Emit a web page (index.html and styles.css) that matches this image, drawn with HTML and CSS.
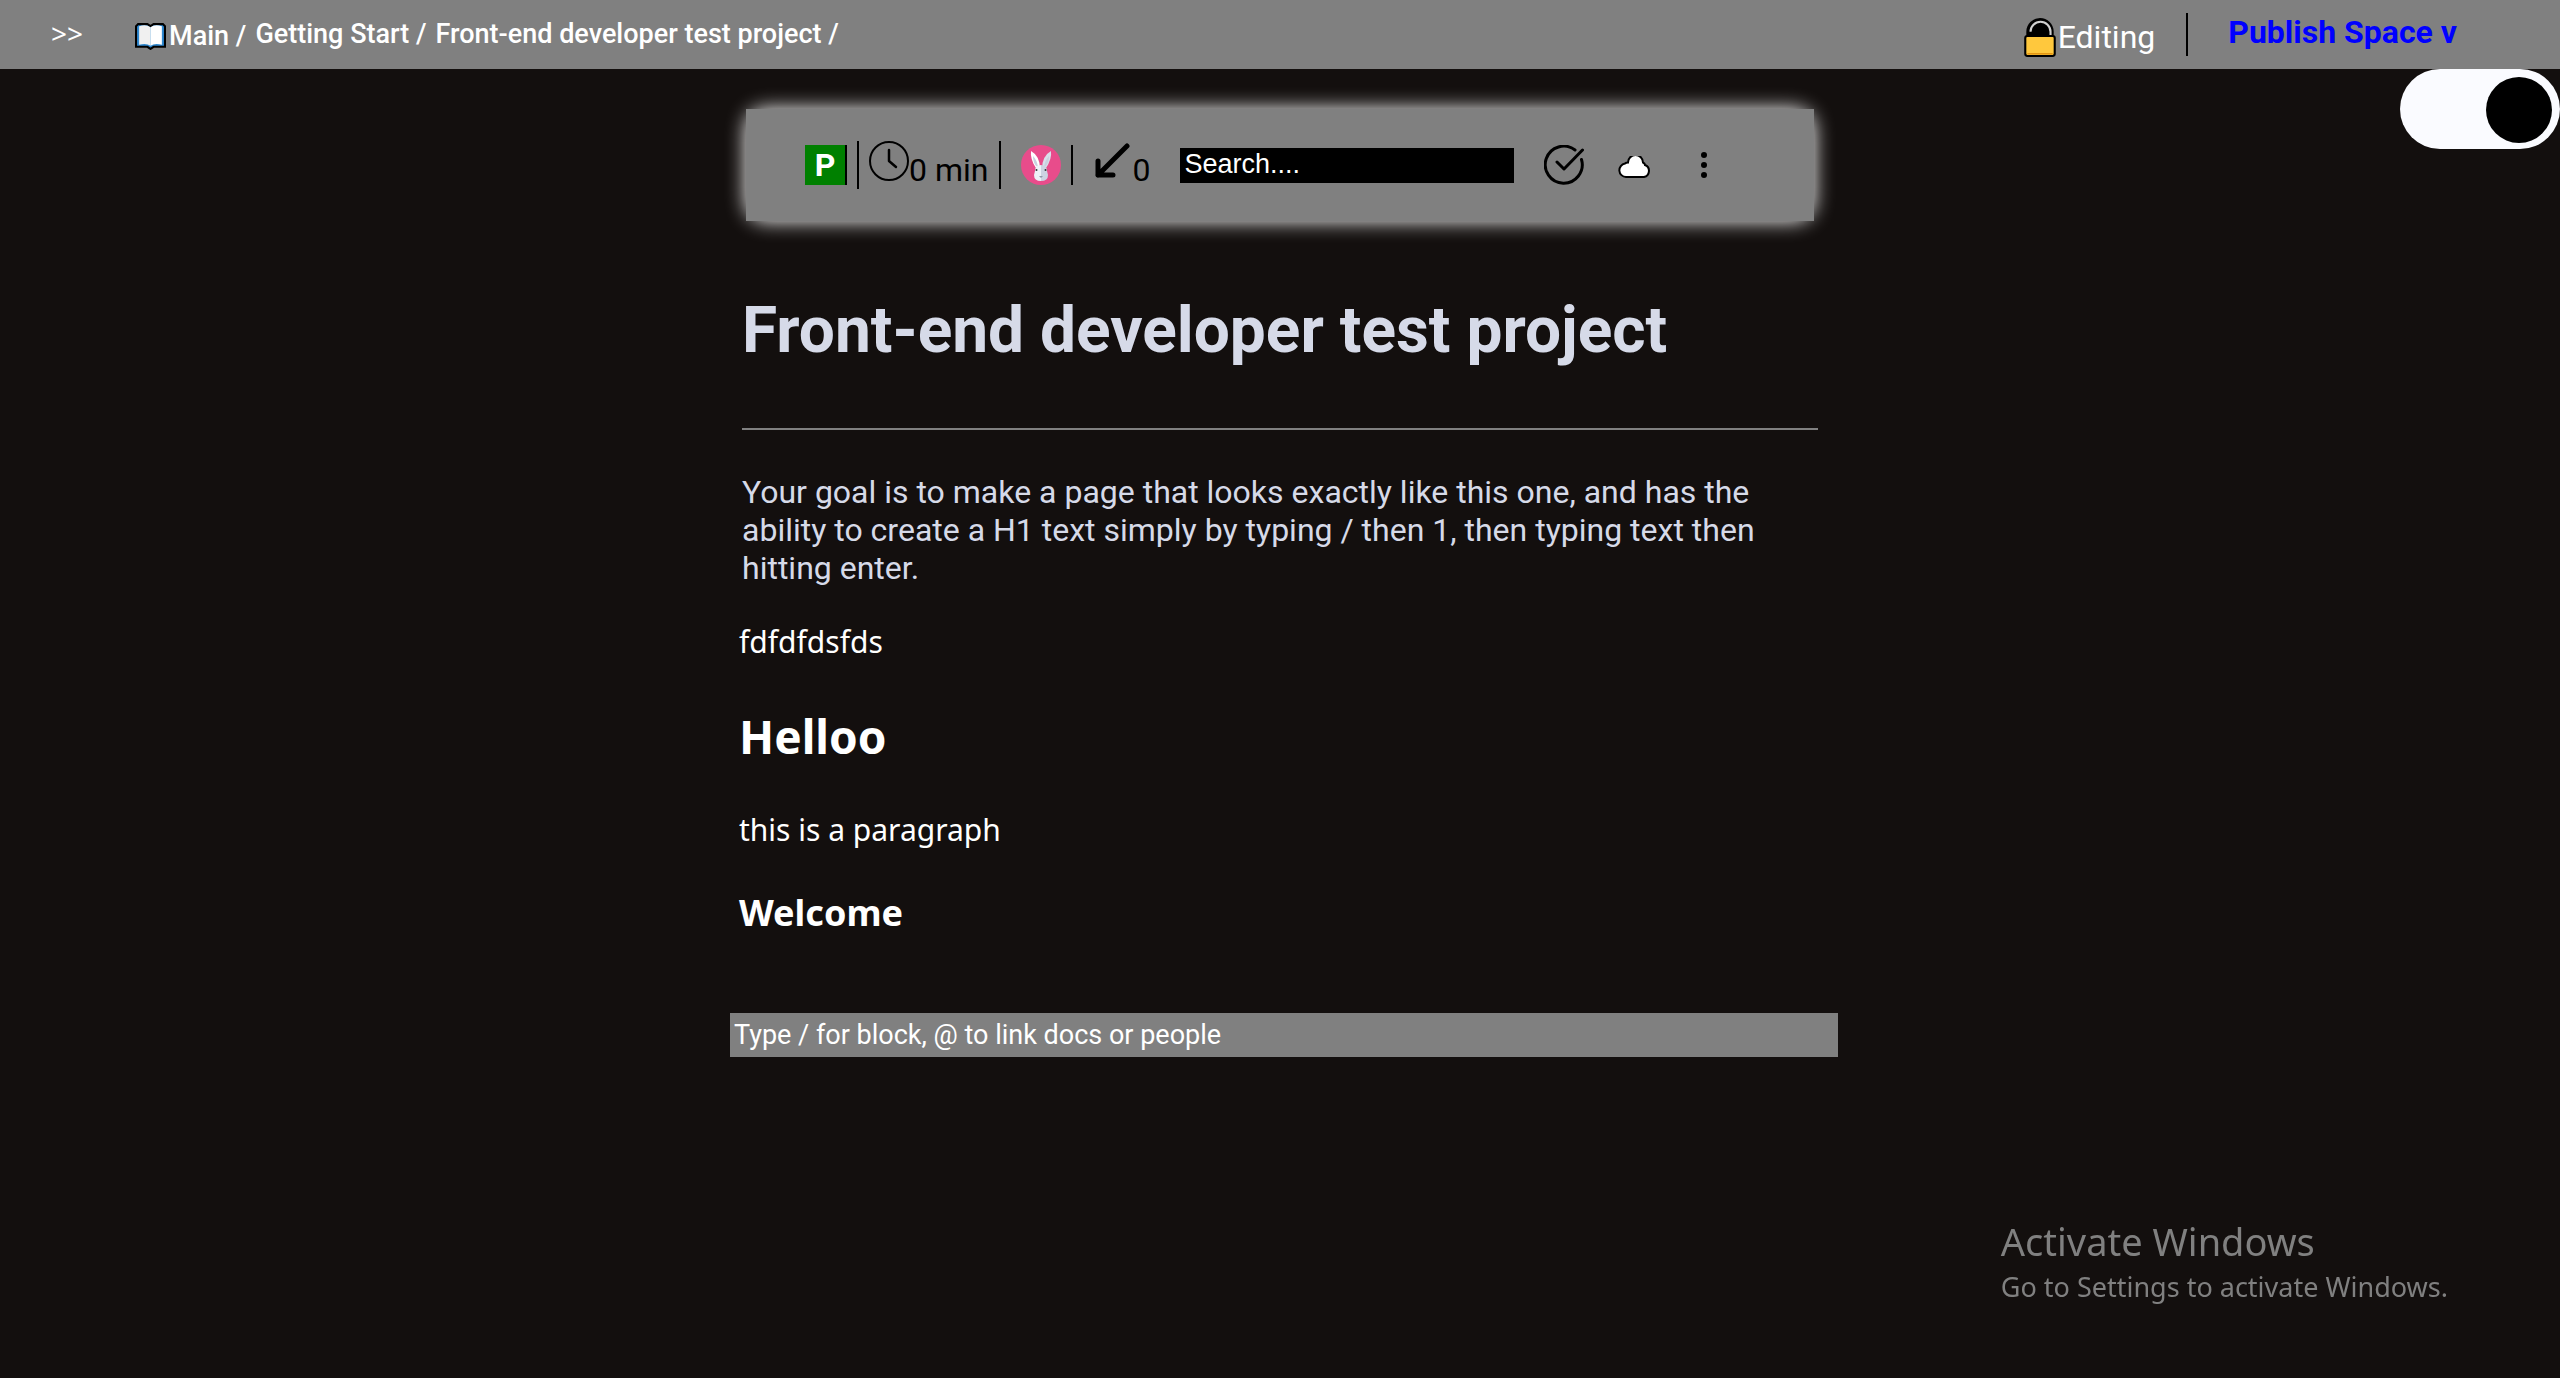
FILE: index.html
```html
<!DOCTYPE html>
<html lang="en">
<head>
<meta charset="utf-8">
<title>Front-end developer test project</title>
<link rel="stylesheet" href="styles.css">
</head>
<body>
<header class="topbar">
  <button class="expand" type="button">&gt;&gt;</button>
  <nav class="crumbs" aria-label="Breadcrumb">
    <a class="crumb crumb-home" href="#main">
      <svg class="book" viewBox="0 0 30 26" aria-hidden="true">
        <path d="M1 3 3 1h9l3 2 3-2h9l2 2v20H18l-3 2-3-2H1z" fill="#2f88cf" stroke="#000" stroke-width="2"/>
        <path d="M4 3q7-2 11 1v18q-4-3-11-1z" fill="#f0f0f0"/>
        <path d="M15 4q4-3 11-1v18q-7-2-11 1z" fill="#fff"/>
      </svg>Main /</a>
    <a class="crumb" href="#start">Getting Start /</a>
    <a class="crumb" href="#project">Front-end developer test project /</a>
  </nav>
  <div class="actions">
    <button class="editing" type="button">
      <svg class="lock" viewBox="0 0 30 38" aria-hidden="true">
        <path d="M2 19v-5a13 13 0 0 1 26 0v5z" fill="#000"/>
        <path d="M6 14a9 9 0 0 1 19 0v5" fill="none" stroke="#d0d0d0" stroke-width="2"/>
        <rect x="1" y="18" width="28" height="19" rx="2" fill="#ffc83d" stroke="#000" stroke-width="2"/>
        <path d="M3 35h24" stroke="#d67d00" stroke-width="1"/>
      </svg>Editing</button>
    <span class="bar"></span>
    <button class="publish" type="button">Publish Space v</button>
  </div>
</header>
<input class="toggle" type="checkbox" role="switch" aria-label="Dark mode" checked>

<main class="page">
  <div class="glow">
    <div class="toolbar">
      <span class="badge">P</span>
      <span class="bar"></span>
      <span class="stat time">
        <svg class="icon" viewBox="0 0 40 40" aria-hidden="true"><g fill="none" stroke="#000" stroke-linecap="round" stroke-linejoin="round"><circle cx="20" cy="20" r="19" stroke-width="2"/><path d="M20 9v11l7 6" stroke-width="2.5"/></g></svg>0 min</span>
      <span class="bar"></span>
      <svg class="icon rabbit" viewBox="0 0 40 40" aria-hidden="true">
        <circle cx="20" cy="20" r="20" fill="#e84c8b"/>
        <path d="M10 6q9 5 9 18l-4-1Q9 14 10 6z" fill="#fff"/>
        <path d="M30 6q-9 5-9 18l4-1q6-9 5-17z" fill="#d9dfeb"/>
        <path d="M12 11q4 4 5 11l-2-1q-3-4-3-10zM28 11q-4 4-5 11l2-1q3-4 3-10z" fill="#c9d0df"/>
        <path d="M20 20q-6 0-6 6l-1 4q0 6 7 6z" fill="#edf1f8"/>
        <path d="M20 20q6 0 6 6l1 4q0 6-7 6z" fill="#ccd3e2"/>
        <circle cx="15.500" cy="25" r="1" fill="#333"/><circle cx="24.500" cy="25" r="1" fill="#333"/>
        <path d="M18 31h4l-2 2z" fill="#8e97a8"/>
      </svg>
      <span class="bar short"></span>
      <span class="stat links">
        <svg class="arrow" viewBox="0 0 36 36" aria-hidden="true"><path d="M33 4 4 33M4 19v14h15" fill="none" stroke="#000" stroke-width="5" stroke-linecap="round" stroke-linejoin="round"/></svg>0</span>
      <input class="search" type="text" placeholder="Search...." aria-label="Search">
      <button class="tool" type="button" aria-label="Resolve">
        <svg class="icon" viewBox="0 0 40 40" aria-hidden="true"><path d="M31 5A18.500 18.500 0 1 0 37.500 14.500M13 17l7 7L38.500 5" fill="none" stroke="#000" stroke-width="3" stroke-linecap="round" stroke-linejoin="round"/></svg></button>
      <button class="tool cloud" type="button" aria-label="Cloud">
        <svg width="34" height="22" viewBox="0 0 34 22" aria-hidden="true"><path d="M8 21a6.800 6.800 0 0 1-1-13.500q1-1 3-1a7.500 7.500 0 0 1 15 0q2 1 2 2.500a6.300 6.300 0 0 1-1 12z" fill="#fff" stroke="#000" stroke-width="2"/></svg></button>
      <button class="tool more" type="button" aria-label="More">
        <svg width="8" height="28" viewBox="0 0 8 28" aria-hidden="true"><circle cx="4" cy="4" r="3"/><circle cx="4" cy="14" r="3"/><circle cx="4" cy="24" r="3"/></svg></button>
    </div>
  </div>

  <h1 class="title">Front-end developer test project</h1>
  <hr class="rule">
  <p class="goal">Your goal is to make a page that looks exactly like this one, and has the ability to create a H1 text simply by typing / then 1, then typing text then hitting enter.</p>

  <section class="blocks">
    <p class="text">fdfdfdsfds</p>
    <h2 class="large">Helloo</h2>
    <p class="text">this is a paragraph</p>
    <h3 class="medium">Welcome</h3>
  </section>
  <input class="composer" type="text" placeholder="Type / for block, @ to link docs or people" aria-label="New block">
</main>

<aside class="notice">
  <p class="notice-title">Activate Windows</p>
  <p class="notice-text">Go to Settings to activate Windows.</p>
</aside>
</body>
</html>
```

FILE: styles.css
```css
* { box-sizing: border-box; }

body {
  margin: 0;
  min-height: 100vh;
  background: #130f0e;
  color: #fff;
  font-family: Roboto, sans-serif;
  font-size: 32px;
}

button {
  padding: 0;
  border: 0;
  background: none;
  color: inherit;
  font: inherit;
}

svg { display: block; flex: none; }

.topbar {
  display: flex;
  align-items: flex-start;
  height: 69px;
  padding: 13px 103px 0 51px;
  background: #808080;
}

.expand {
  margin-right: 52px;
  font: 28px/40px "Noto Sans", sans-serif;
}

.crumbs {
  display: flex;
  gap: 9px;
  padding-top: 1px;
  font-size: 27px;
  font-weight: 500;
  line-height: 40px;
}

.crumb { color: inherit; text-decoration: none; }
.crumb-home { display: flex; align-items: center; gap: 3px; padding-top: 2px; }
.book { width: 31px; height: 27px; }

.actions {
  display: flex;
  align-items: flex-start;
  margin-left: auto;
}

.editing {
  display: flex;
  align-items: center;
  gap: 2px;
  margin-right: 31px;
  padding-top: 4px;
  line-height: 40px;
}

.lock { width: 32px; height: 40px; }

.bar {
  flex: none;
  width: 2px;
  height: 43px;
  background: #000;
}

.publish {
  margin-left: 40px;
  color: #00f;
  font-weight: 700;
  line-height: 38px;
}

.toggle {
  position: absolute;
  top: 69px;
  right: 0;
  width: 160px;
  height: 80px;
  margin: 0;
  padding: 8px;
  border-radius: 40px;
  background: #fafbff;
  appearance: none;
}

.toggle::before {
  content: "";
  display: block;
  width: 66px;
  height: 66px;
  border-radius: 50%;
  background: #000;
}

.toggle:checked::before { margin-left: auto; }

.page {
  width: 42%;
  min-width: 1076px;
  margin: 0 auto;
  padding-top: 40px;
}

.glow {
  margin: 0 4px;
  border-radius: 20px;
  box-shadow: 0 0 20px #fff;
}

.toolbar {
  display: flex;
  align-items: center;
  height: 112px;
  padding: 0 106px 0 59px;
  background: #808080;
  color: #000;
}

.toolbar .bar { height: 48px; }
.toolbar .short { height: 40px; }

.badge {
  width: 42px;
  height: 40px;
  margin-right: 10px;
  border-right: 2px solid #000;
  background: #008000;
  color: #fff;
  font-weight: 700;
  line-height: 40px;
  text-align: center;
}

.stat { display: flex; align-items: flex-start; line-height: 58px; height: 48px; }
.time { margin: 0 11px 0 10px; }
.icon { width: 40px; height: 40px; }
.rabbit { margin: 0 10px 0 20px; }
.links { gap: 2px; margin: 0 30px 0 21px; }
.arrow { width: 36px; height: 38px; }

.search {
  flex: 1;
  min-width: 0;
  height: 35px;
  padding: 0 4px 2px;
  border: 0;
  background: #000;
  color: #fff;
  font: 27px "Liberation Sans", Arial, sans-serif;
}

.search::placeholder, .composer::placeholder { color: #fff; opacity: 1; }

.tool { margin-left: 30px; }
.cloud { margin-left: 34px; padding-top: 4px; }
.more { margin-left: 48px; }

.title {
  margin: 69px 0 56px;
  color: #d6dae8;
  font-size: 64px;
  line-height: 82px;
}

.rule {
  height: 2px;
  margin: 0;
  border: 0;
  background: #808080;
}

.goal {
  margin: 43px 0 0;
  padding-right: 50px;
  color: #d6dae8;
  line-height: 38px;
}

.blocks {
  margin-left: -3px;
  font-family: "Noto Sans", sans-serif;
}

.text { margin: 34px 0; font-size: 30px; line-height: 42px; }
.large { margin: 0; font-size: 46px; line-height: 78px; }
.medium { margin: 0; font-size: 36px; line-height: 56px; }

.composer {
  width: calc(100% + 32px);
  height: 44px;
  margin: 72px 0 0 -12px;
  padding: 0 4px;
  border: 0;
  background: #808080;
  color: #fff;
  font: 27px Roboto, sans-serif;
}

.notice {
  position: fixed;
  right: 112px;
  bottom: 71px;
  color: #808080;
  font-family: "Noto Sans", sans-serif;
}

.notice-title { margin: 0; font-size: 38px; line-height: 52px; }
.notice-text { margin: 0; font-size: 27px; line-height: 40px; }
```
